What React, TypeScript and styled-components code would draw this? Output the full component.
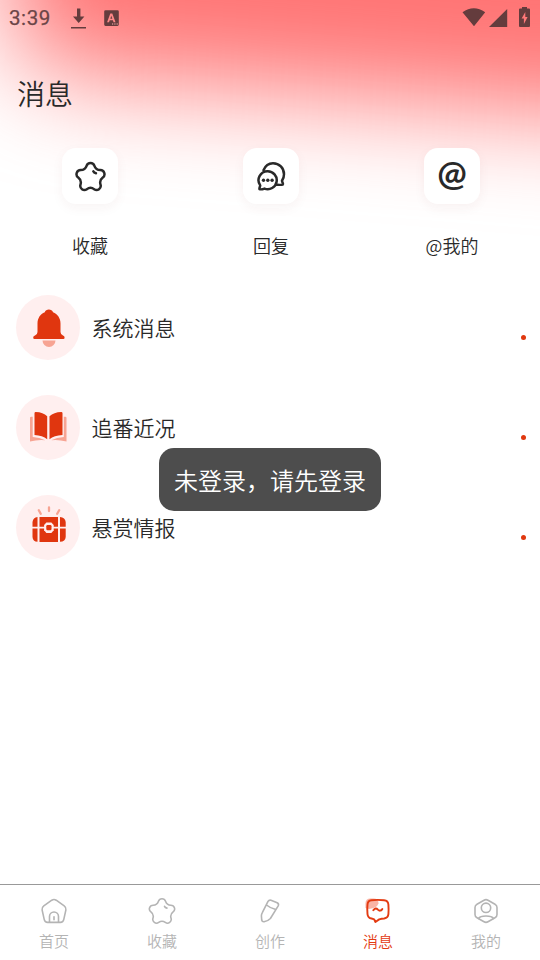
import React from "react";
import styled, { createGlobalStyle } from "styled-components";

const Global = createGlobalStyle`
  * { box-sizing: border-box; }
  body { margin: 0; background: #fff; font-family: "Noto Sans CJK SC", sans-serif; font-weight: 350; color: #292929; }
`;

const Screen = styled.div`
  position: relative;
  isolation: isolate;
  display: flex;
  flex-direction: column;
  width: 540px;
  height: 960px;
  overflow: hidden;
  background: #fff;
`;

const Glow = styled.div`
  position: absolute;
  z-index: -1;
  left: -2px;
  top: -250px;
  width: 800px;
  height: 318px;
  border-radius: 0 0 0 80px;
  transform: rotate(4.5deg);
  transform-origin: 0 100%;
  background: #ff7474;
  filter: blur(52px);
`;

const StatusBar = styled.header`
  display: flex;
  align-items: center;
  height: 36px;
  padding: 0 9px;
  color: #643c3d;
`;

const Clock = styled.span`
  width: 61px;
  padding-top: 1px;
  font: 400 20.5px/37px Roboto, sans-serif;
  letter-spacing: 0.6px;
  color: #6b4547;
  -webkit-text-stroke: 0.25px #6b4547;
`;

const StatusIcons = styled.svg`
  display: block;
  fill: currentColor;
`;

const Spacer = styled.div`
  flex: 1;
`;

const Title = styled.h1`
  margin: 36px 0 0 17px;
  font-size: 28px;
  line-height: 42px;
  font-weight: 350;
  color: #292929;
`;

const Shortcuts = styled.nav`
  display: flex;
  justify-content: space-between;
  margin-top: 34px;
  padding: 0 60px 0 62px;
`;

const Shortcut = styled.div`
  display: flex;
  flex-direction: column;
  align-items: center;
  width: 56px;
  font-size: 18px;
  line-height: 28px;
  white-space: nowrap;
`;

const Tile = styled.div`
  display: grid;
  place-items: center;
  width: 56px;
  height: 56px;
  margin-bottom: 27px;
  border-radius: 14px;
  background: #fff;
  box-shadow: 0 4px 12px rgba(120, 40, 40, 0.05);
`;

const LineIcon = styled.svg<{ $weight: number }>`
  display: block;
  fill: none;
  stroke: currentColor;
  stroke-width: ${(p) => p.$weight};
  stroke-linecap: round;
  stroke-linejoin: round;
`;

const At = styled.span`
  font: 700 35px/36px Lato, sans-serif;
  transform: translateY(-4px);
`;

const List = styled.main`
  flex: 1;
  padding: 18px 14px 0 16px;
`;

const Row = styled.div`
  display: flex;
  align-items: center;
  height: 100px;
`;

const Badge = styled.div`
  width: 64px;
  height: 65px;
  border-radius: 50%;
  background: #ffefef;
`;

const RowLabel = styled.span`
  flex: 1;
  margin-left: 11.5px;
  font-size: 21px;
  line-height: 30px;
`;

const Dot = styled.i`
  width: 5px;
  height: 5px;
  margin-top: 20px;
  border-radius: 50%;
  background: #e0380f;
`;

const Toast = styled.div`
  position: absolute;
  left: 159px;
  top: 448px;
  width: 222px;
  height: 63px;
  border-radius: 15px;
  background: #4d4d4d;
  color: #fff;
  font-size: 24px;
  line-height: 63px;
  text-align: center;
  white-space: nowrap;
`;

const TabBar = styled.footer`
  display: grid;
  grid-template-columns: repeat(5, 1fr);
  height: 76px;
  border-top: 1px solid #999;
  background: #fff;
`;

const Tab = styled.div<{ $active?: boolean }>`
  display: flex;
  flex-direction: column;
  align-items: center;
  padding-top: 12px;
  font-size: 15px;
  line-height: 22px;
  color: ${(p) => (p.$active ? "#e33b12" : "#b4b4b4")};

  svg { margin-bottom: 5px; }
`;

/* Soft star outline: five convex lobes joined by tangent concave arcs. */
const starPath = () => {
  const lobe = 4;
  const valley = 6.08;
  const at = (radius: number, deg: number) => {
    const a = (deg * Math.PI) / 180;
    return [15 + radius * Math.cos(a), 15.9 + radius * Math.sin(a)];
  };
  const join = (lobeDeg: number, valleyDeg: number) => {
    const [lx, ly] = at(10, lobeDeg);
    const [vx, vy] = at(16.28, valleyDeg);
    const t = lobe / (lobe + valley);
    return `${(lx + (vx - lx) * t).toFixed(2)} ${(ly + (vy - ly) * t).toFixed(2)}`;
  };
  let d = `M${join(-90, -126)}`;
  for (let i = 0; i < 5; i++) {
    const deg = -90 + i * 72;
    d += `A${lobe} ${lobe} 0 0 1 ${join(deg, deg + 36)}`;
    d += `A${valley} ${valley} 0 0 0 ${join(deg + 72, deg + 36)}`;
  }
  return d + "Z";
};
const STAR = starPath();

const StarIcon = ({ size, weight }: { size: number; weight: number }) => (
  <LineIcon $weight={weight} width={size} height={size} viewBox="0 0 30 30">
    <path d={STAR} />
    <path d="M17.700 10q.6 1.500 2.600 1.900" />
  </LineIcon>
);

const ReplyIcon = () => (
  <LineIcon $weight={2.5} width="30" height="30" viewBox="0 0 30 30">
    <path d="M7.500 9.200C9.300 4.700 12.600 2.200 17 2.200c6.300 0 11 4.900 11 11 0 2.600-.8 4.800-2 6.600 0 1.400 1.800 3 .8 3.800-1.800.5-5 .2-6.500.2" />
    <path d="M11.500 10.200a9 9 0 1 1-3 17.400c-1.700.6-4.200.9-5 .5-.5-.9.800-2.700.7-3.700A9 9 0 0 1 11.500 10.200Z" />
    <g fill="currentColor" stroke="none">
      <circle cx="7.500" cy="19.300" r="1.700" />
      <circle cx="11.800" cy="19.300" r="1.700" />
      <circle cx="16.100" cy="19.300" r="1.700" />
    </g>
  </LineIcon>
);

const BellBadge = () => (
  <svg width="64" height="65" viewBox="0 0 64 65">
    <path d="M26.500 45.500h13a6.500 6.500 0 0 1-13 0Z" fill="#f7a493" />
    <path d="M18.500 44q-1.300 0-1.300-1.500 0-1.500 1.800-2 2.500-.9 2.500-3.500v-8.500c0-5.300 2.700-9.400 7.300-11.300.8-3.700 7.300-3.700 8.200 0 4.600 1.900 7.500 6 7.500 11.300V37q0 2.600 2.500 3.500 1.600.6 1.600 2 0 1.500-1.200 1.500Z" fill="#e0360f" />
  </svg>
);

const BookBadge = () => (
  <svg width="64" height="65" viewBox="0 0 64 65">
    <path d="M14 23q0-1.200 1.200-1.200h1.500V42q7 .5 12.500 3.200-7-.9-15.200 1.300ZM50.500 23q0-1.200-1.200-1.200h-1.500V42q-7 .5-12.500 3.200 7-.9 15.200 1.300Z" fill="#f7a493" />
    <path d="M18.500 18.200q0-1.200 1.200-1.200 7.500.2 11.500 4.300v23Q26.500 40.500 18.500 40ZM46.500 18.200q0-1.200-1.200-1.200-7.500.2-11.800 4.300v23q4.500-3.800 13-4.300Z" fill="#e0360f" />
  </svg>
);

const ChestBadge = () => (
  <svg width="64" height="65" viewBox="0 0 64 65">
    <path d="m22.800 15.200 1.900 3.600M33 12.500v3.600M43.200 15.200l-2 3.600" stroke="#f7a493" strokeWidth="2.300" strokeLinecap="round" />
    <path d="M23.500 22H42v9.700H23.500ZM21.500 22v9.700h-5V27q.6-4.500 5-5ZM44 22q5.200.5 5.700 5v4.700H44ZM16.500 33.500h5V46.700q-4.700 0-5-4.700ZM49.700 33.500H44V46.700q5.400 0 5.700-4.700ZM23.500 33.500H42v13.500H23.500Z" fill="#e0360f" />
    <path d="M30.400 27.500h5l2.300 2.600v5.200l-2.300 2.600h-5l-2.300-2.600v-5.200Z" fill="#ffefef" />
    <rect x="30.300" y="30" width="5.200" height="5.200" rx="1.200" fill="#e0360f" />
  </svg>
);

const HomeIcon = () => (
  <LineIcon $weight={1.600} width="28" height="28" viewBox="0 0 28 28">
    <path d="M11.800 3.200q2.200-1.300 4.400 0l8 5.600q2.200 1.600 1.700 4l-2.100 9.600q-.6 3-3.400 3H7.600q-2.800 0-3.400-3L2.100 12.800q-.5-2.400 1.700-4Z" />
    <path d="M9.500 25.200v-5.700a4.500 4.500 0 0 1 9 0v5.700M14 19.800v3" />
  </LineIcon>
);

const PencilIcon = () => (
  <LineIcon $weight={1.600} width="28" height="28" viewBox="0 0 28 28">
    <path d="M12 4.400q1-1.700 3-1.200l6.200 2.600q2 1.200 1 3l-7.800 12.700q-2.500 2.600-6.300 3.300-2 .2-2.400-1.800l-.3-4.200q0-1.600.8-3ZM10.500 8q3.700 3 8.600 4.300" />
  </LineIcon>
);

const MessageIcon = () => (
  <LineIcon $weight={1.900} width="28" height="28" viewBox="0 0 28 28">
    <path d="M1.500 11V6.500q0-5 5-5h3q5 0 5 5Q13 11 5 12Z" fill="#f9b4a6" stroke="none" />
    <path d="M7.500 3.200q6-.7 12.500 0 4.200.5 4.400 4.400.4 5 0 9.500-.3 3.700-4.200 4.400-2.500.2-5 .9l-3.800 2.600-1.200-2.700-2.700-.8q-3.600-.6-4-4.400-.5-5 0-9.500Q3.700 3.700 7.500 3.200Z" />
    <path d="M9.300 13.300q2.300-3.300 4.600-.7 2.300 2.400 4.400-.5" />
  </LineIcon>
);

const ProfileIcon = () => (
  <LineIcon $weight={1.600} width="28" height="28" viewBox="0 0 28 28">
    <path d="M12 3.200q2-1.100 4 0l7 4q2 1.100 2 3.400v6.800q0 2.300-2 3.400l-7 4q-2 1.100-4 0l-7-4q-2-1.100-2-3.400v-6.800q0-2.300 2-3.400Z" />
    <circle cx="14" cy="10.800" r="4.700" />
    <path d="M6.500 21.500q1.500-2.500 7.500-2.500t7.500 2.500" />
  </LineIcon>
);

const rows = [
  { label: "系统消息", icon: <BellBadge /> },
  { label: "追番近况", icon: <BookBadge /> },
  { label: "悬赏情报", icon: <ChestBadge /> },
];

const tabs = [
  { label: "首页", icon: <HomeIcon /> },
  { label: "收藏", icon: <StarIcon size={28} weight={1.700} /> },
  { label: "创作", icon: <PencilIcon /> },
  { label: "消息", icon: <MessageIcon />, active: true },
  { label: "我的", icon: <ProfileIcon /> },
];

export default function App() {
  return (
    <>
      <Global />
      <Screen>
        <Glow />
        <StatusBar>
          <Clock>3:39</Clock>
          <StatusIcons width="60" height="36" viewBox="70 0 60 36">
            <path d="M77 8.500h3.400v8h4l-5.700 6.500-5.700-6.500h4ZM71 27h15v1.600H71Z" />
            <path fillRule="evenodd" d="M105.500 10.300h12q1.300 0 1.300 1.300v13q0 1.300-1.300 1.300h-12q-1.300 0-1.300-1.300v-13q0-1.300 1.300-1.300ZM110.300 13.500l-3.200 8.700h1.900l.7-1.900h3.200l.7 1.900h1.900l-3.200-8.700Zm1 2.300 1 3h-2Z" />
            <path d="M112 24h1.200M114.300 24h1.200M116.600 24h1.200" stroke="#ffb0b0" strokeWidth="1.200" />
          </StatusIcons>
          <Spacer />
          <StatusIcons width="70" height="36" viewBox="461 0 70 36">
            <path d="M462.500 12.300Q473.800 4 485.200 12.300L474 26.300ZM507.200 9v18H489Z" />
            <path fillRule="evenodd" d="M522 7h5v1.600h2q1 0 1 1v16.400q0 1-1 1h-9q-1 0-1-1V9.600q0-1 1-1h2ZM525.300 12l-3.700 6.500h2.300v5.500l3.700-7h-2.300Z" />
          </StatusIcons>
        </StatusBar>
        <Title>消息</Title>
        <Shortcuts>
          <Shortcut><Tile><StarIcon size={31} weight={2.400} /></Tile>收藏</Shortcut>
          <Shortcut><Tile><ReplyIcon /></Tile>回复</Shortcut>
          <Shortcut><Tile><At>@</At></Tile>@我的</Shortcut>
        </Shortcuts>
        <List>
          {rows.map((r) => (
            <Row key={r.label}>
              <Badge>{r.icon}</Badge>
              <RowLabel>{r.label}</RowLabel>
              <Dot />
            </Row>
          ))}
        </List>
        <TabBar>
          {tabs.map((t) => (
            <Tab key={t.label} $active={t.active}>{t.icon}{t.label}</Tab>
          ))}
        </TabBar>
        <Toast>未登录，请先登录</Toast>
      </Screen>
    </>
  );
}
